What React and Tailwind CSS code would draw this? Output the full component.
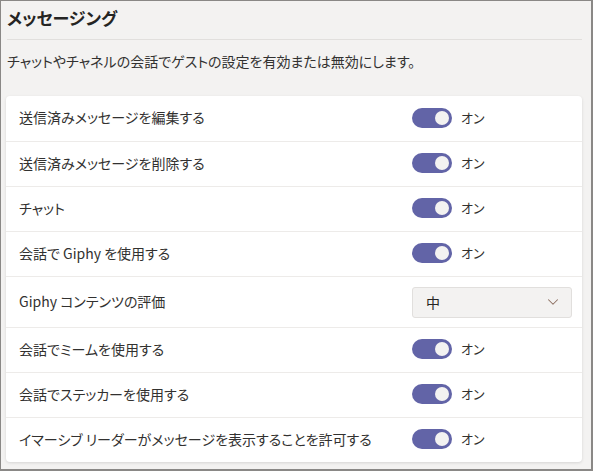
import { ChevronDown } from "lucide-react";

const rows = [
  { label: "送信済みメッセージを編集する", type: "toggle" },
  { label: "送信済みメッセージを削除する", type: "toggle" },
  { label: "チャット", type: "toggle" },
  { label: "会話で Giphy を使用する", type: "toggle" },
  { label: "Giphy コンテンツの評価", type: "select", value: "中" },
  { label: "会話でミームを使用する", type: "toggle" },
  { label: "会話でステッカーを使用する", type: "toggle" },
  { label: "イマーシブ リーダーがメッセージを表示することを許可する", type: "toggle" },
];

function Toggle() {
  return (
    <div className="flex items-center gap-[9px] -translate-y-[1px]">
      <div className="w-[40px] h-[20px] rounded-full bg-[#6264a7] flex items-center justify-end pr-[3px]">
        <div className="w-[14px] h-[14px] rounded-full bg-[#f3f2f1]" />
      </div>
      <span className="text-[13px] text-[#323130]">オン</span>
    </div>
  );
}

function Select({ value }) {
  return (
    <div className="w-[160px] h-[31px] bg-[#f3f2f1] border border-[#e1dfdd] rounded-[3px] flex items-center justify-between pl-[13px] pr-[9px]">
      <span className="text-[14px] text-[#252423]">{value}</span>
      <ChevronDown size={18} strokeWidth={1.4} className="text-[#8c6e60]" />
    </div>
  );
}

export default function App() {
  return (
    <div
      className="w-[593px] h-[471px] bg-[#f3f2f1] border-t border-l border-b-2 border-r-2 border-[#8a8886] overflow-hidden [font-feature-settings:'palt']"
      style={{ fontFamily: '"Noto Sans CJK JP", "Noto Sans", sans-serif' }}
    >
      <div className="pl-[5px] pr-[9px]">
        <h1 className="pl-[1px] pb-[5px] h-[38px] flex items-center text-[17px] font-bold text-[#252423]">
          メッセージング
        </h1>
        <div className="ml-[1px] h-px bg-[#e1dfdd]" />
        <p className="pl-[1px] pt-[11px] h-[56px] text-[14px] text-[#323130]">
          チャットやチャネルの会話でゲストの設定を有効または無効にします。
        </p>
        <div className="bg-white rounded-[4px] shadow-[0_1px_3px_rgba(0,0,0,0.12)]">
          {rows.map((row, i) => (
            <div
              key={row.label}
              className={`flex items-center pl-[13px] pr-[10px] ${
                row.type === "select" ? "h-[51px]" : "h-[45px]"
              } ${i === 0 ? "h-[44px]" : "border-t border-[#edebe9]"}`}
            >
              <span className="flex-1 text-[14px] text-[#323130] -translate-y-[1px]">{row.label}</span>
              <div className="w-[160px]">
                {row.type === "toggle" ? <Toggle /> : <Select value={row.value} />}
              </div>
            </div>
          ))}
        </div>
      </div>
    </div>
  );
}
